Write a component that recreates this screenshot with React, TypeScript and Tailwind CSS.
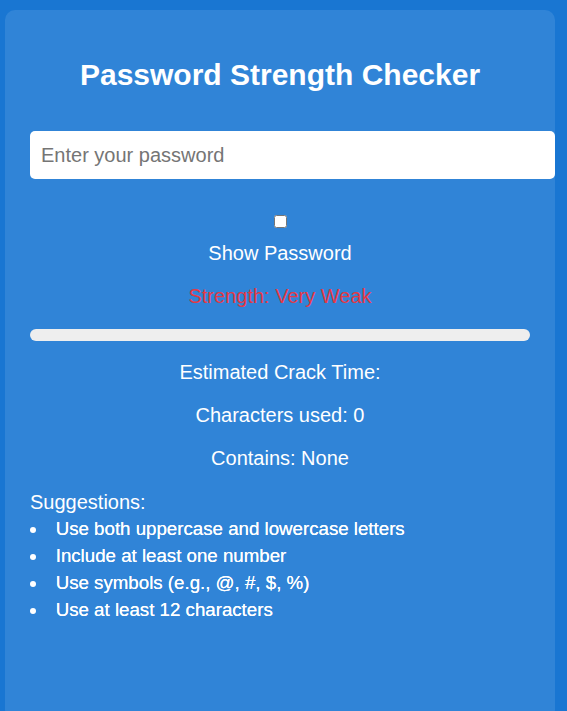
export default function App() {
  const tips = [
    "Use both uppercase and lowercase letters",
    "Include at least one number",
    "Use symbols (e.g., @, #, $, %)",
    "Use at least 12 characters",
  ];

  return (
    <div className="min-h-[711px] bg-[#1976d2] pt-[10px] overflow-hidden font-['Liberation_Sans',Arial,sans-serif] text-white">
      <div className="ml-[5px] w-[550px] h-[710px] rounded-[10px] bg-[#3084d7] px-[25px] pt-[48px]">
        <h2 className="text-center text-[30px] leading-[34.5px] font-bold">Password Strength Checker</h2>

        <input
          type="password"
          placeholder="Enter your password"
          className="mt-[38.5px] block w-[525px] h-[48px] rounded-[5px] bg-white border-0 pl-[11px] text-[20px] text-black placeholder:text-[#757575] outline-none"
        />

        <input type="checkbox" className="block mx-auto mt-[36px] w-[13px] h-[13px]" />
        <p className="text-center text-[20px] leading-[23px] mt-[14px]">Show Password</p>

        <p className="text-center text-[20px] leading-[23px] mt-[20px] text-[#e53945]">Strength: Very Weak</p>

        <div className="mt-[21px] h-[12px] w-[500px] rounded-full bg-[#eeeeee]" />

        <p className="text-center text-[20px] leading-[23px] mt-[20px]">Estimated Crack Time: </p>
        <p className="text-center text-[20px] leading-[23px] mt-[19.5px]">Characters used: 0</p>
        <p className="text-center text-[20px] leading-[23px] mt-[20px]">Contains: None</p>

        <div className="mt-[21px]">
          <p className="text-[20px] leading-[23px]">Suggestions:</p>
          <ul className="mt-[1px] list-disc list-inside text-[18.7px] leading-[27px] [text-shadow:0_0_0.4px_#fff]">
            {tips.map((t) => (
              <li key={t}>{t}</li>
            ))}
          </ul>
        </div>
      </div>
    </div>
  );
}
